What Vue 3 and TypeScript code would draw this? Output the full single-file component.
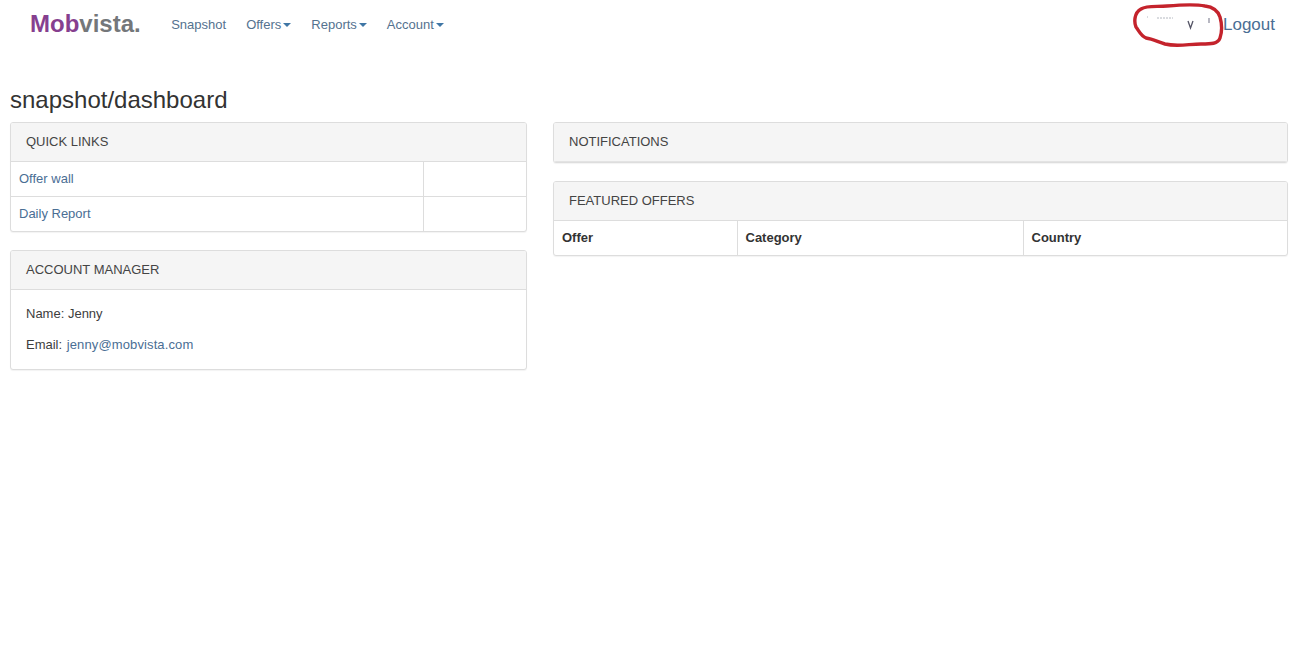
<script setup lang="ts">
const menus: { label: string; caret: boolean }[] = [
  { label: 'Snapshot', caret: false },
  { label: 'Offers', caret: true },
  { label: 'Reports', caret: true },
  { label: 'Account', caret: true },
]
</script>

<template>
  <div class="page">
    <nav class="navbar">
      <a class="brand"><span class="purple">Mob</span><span class="grey">vista.</span></a>
      <ul class="nav">
        <li v-for="m in menus" :key="m.label">
          <a>{{ m.label }}<span v-if="m.caret" class="caret"></span></a>
        </li>
      </ul>
      <div class="user">
        <div class="user-name">
          <svg class="scribble" width="92" height="46" viewBox="0 0 92 46">
            <path d="M8 6 C14 2 24 4 34 3 C46 2 62 1 72 3 C80 4 85 8 87 14 C89 21 89 29 87 35 C85 41 78 41 68 41 C56 41 44 44 32 41 C25 39 20 36 13 35 C8 33 6 28 3 24 C1 19 1 10 8 6 Z" fill="none" stroke="#c4232c" stroke-width="3.4" />
            <path d="M14 14h1M24 15h16" stroke="#b4b8c0" stroke-width="1" stroke-dasharray="2 1" fill="none" />
            <path d="M55 18l2.5 7 2.5-7" stroke="#556" stroke-width="1.3" fill="none" />
            <path d="M76 15v5" stroke="#889" stroke-width="1.2" fill="none" />
          </svg>
        </div>
        <a class="logout">Logout</a>
      </div>
    </nav>

    <h3 class="title">snapshot/dashboard</h3>

    <div class="columns">
      <div class="col">
        <section class="panel">
          <header class="panel-heading">QUICK LINKS</header>
          <table class="table links">
            <tbody>
              <tr><td class="wide"><a>Offer wall</a></td><td></td></tr>
              <tr><td class="wide"><a>Daily Report</a></td><td></td></tr>
            </tbody>
          </table>
        </section>
        <section class="panel">
          <header class="panel-heading">ACCOUNT MANAGER</header>
          <div class="panel-body">
            <p>Name: Jenny</p>
            <p>Email: <a class="mail">jenny@mobvista.com</a></p>
          </div>
        </section>
      </div>
      <div class="col">
        <section class="panel notifications">
          <header class="panel-heading">NOTIFICATIONS</header>
        </section>
        <section class="panel">
          <header class="panel-heading">FEATURED OFFERS</header>
          <table class="table offers">
            <thead>
              <tr><th class="c1">Offer</th><th class="c2">Category</th><th>Country</th></tr>
            </thead>
          </table>
        </section>
      </div>
    </div>
  </div>
</template>

<style>
html, body { margin: 0; background: #fff; }
</style>

<style scoped>
.page {
  height: 653px;
  overflow: hidden;
  font-family: "Liberation Sans", Arial, sans-serif;
  font-size: 13px;
  line-height: 20px;
  color: #3d3d3d;
  background: #fff;
}
a { color: #4a6e94; text-decoration: none; }
.navbar {
  display: flex;
  align-items: center;
  height: 48px;
  padding: 0 26px 0 30px;
}
.brand {
  font-size: 24px;
  font-weight: 700;
  line-height: 48px;
}
.purple { color: #863f8f; }
.grey { color: #74777a; }
.nav {
  display: flex;
  list-style: none;
  margin: 0 0 0 30.5px;
  padding: 1px 0 0;
  gap: 20px;
}
.nav a { color: #54728f; font-size: 13px; }
.caret {
  display: inline-block;
  width: 0;
  height: 0;
  margin-left: 2px;
  vertical-align: middle;
  border-top: 4px solid #3f76a5;
  border-left: 4px solid transparent;
  border-right: 4px solid transparent;
}
.user {
  margin-left: auto;
  display: flex;
  align-items: center;
}
.user-name { position: relative; width: 90px; height: 46px; }
.scribble { position: absolute; left: 0; top: 2px; }
.logout { font-size: 17px; color: #4a6e94; padding-top: 2px; }
.title {
  margin: 40px 0 10px 10px;
  font-size: 24px;
  font-weight: 400;
  line-height: 24px;
  height: 24px;
  color: #333;
}
.columns {
  display: grid;
  grid-template-columns: 517px 735px;
  gap: 26px;
  margin-left: 10px;
}
.panel {
  background: #fff;
  border: 1px solid #ddd;
  border-radius: 3px;
  margin-bottom: 18px;
  box-shadow: 0 1px 1px rgba(0, 0, 0, 0.05);
  overflow: hidden;
}
.panel-heading {
  background: #f5f5f5;
  color: #444;
  height: 39px;
  line-height: 37px;
  padding: 0 15px;
  box-sizing: border-box;
  border-bottom: 1px solid #ddd;
}
.notifications .panel-heading { border-bottom-color: #e3e3e3; }
.table {
  width: 100%;
  border-collapse: collapse;
  table-layout: fixed;
}
.table td, .table th {
  height: 35px;
  padding: 0 8px;
  box-sizing: border-box;
  text-align: left;
  border-left: 1px solid #ddd;
  border-top: 1px solid #ddd;
}
.table td:first-child, .table th:first-child { border-left: 0; }
.table tr:first-child td, .table tr:first-child th { border-top: 0; height: 34px; }
.table th { color: #333; }
.links .wide { width: 412px; }
.offers .c1 { width: 183px; }
.offers .c2 { width: 286px; }
.panel-body { padding: 14px 15px 3px; height: 62px; }
.panel-body p { margin: 0 0 11px; }
.mail { letter-spacing: 0.12px; margin-left: 1px; }
</style>
